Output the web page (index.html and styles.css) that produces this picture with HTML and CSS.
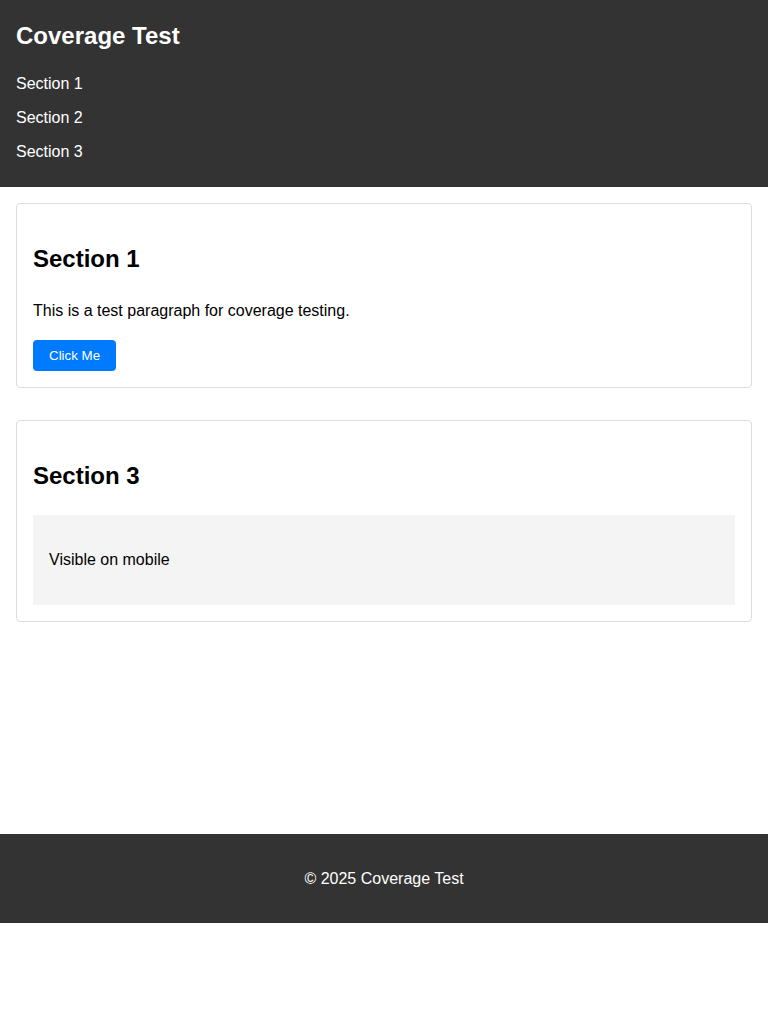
FILE: index.html
```html
<!DOCTYPE html>
<html lang="en">
<head>
<meta charset="utf-8">
<title>Coverage Test</title>
<link rel="stylesheet" href="styles.css">
</head>
<body>
<header class="site-header">
  <h1 class="site-title">Coverage Test</h1>
  <nav class="site-nav">
    <a class="nav-link" href="#section1">Section 1</a>
    <a class="nav-link" href="#section2">Section 2</a>
    <a class="nav-link" href="#section3">Section 3</a>
  </nav>
</header>
<main class="content">
  <section class="card" id="section1">
    <h2 class="card-title">Section 1</h2>
    <p class="card-text">This is a test paragraph for coverage testing.</p>
    <button class="btn" type="button">Click Me</button>
  </section>
  <section class="card" id="section3">
    <h2 class="card-title">Section 3</h2>
    <div class="mobile-box">
      <p class="card-text">Visible on mobile</p>
    </div>
  </section>
</main>
<footer class="site-footer">
  <p class="footer-text">© 2025 Coverage Test</p>
</footer>
</body>
</html>
```

FILE: styles.css
```css
* {
  box-sizing: border-box;
}

body {
  margin: 0;
  font-family: "Liberation Sans", Arial, sans-serif;
  font-size: 16px;
  line-height: 1.6;
  color: #000;
  background: #fff;
}

.site-header {
  background: #333;
  color: #fff;
  padding: 17px 16px 18px;
}

.site-title {
  margin: 0;
  font-size: 24px;
  line-height: 38px;
  font-weight: bold;
}

.site-nav {
  margin-top: 12px;
  display: flex;
  flex-direction: column;
}

.nav-link {
  display: block;
  color: #fff;
  text-decoration: none;
  padding: 4px 0;
  line-height: 26px;
}

.content {
  padding: 16px;
  min-height: 647px;
}

.card {
  border: 1px solid #ddd;
  border-radius: 4px;
  padding: 16px;
  margin-bottom: 32px;
}

.card-title {
  font-size: 24px;
  margin: 19.92px 0;
  line-height: 1.6;
}

.card-text {
  margin: 16px 0;
}

.btn {
  display: block;
  background: #007bff;
  color: #fff;
  border: none;
  border-radius: 4px;
  padding: 8px 16px;
  font-family: "Liberation Sans", Arial, sans-serif;
  font-size: 13.333px;
  line-height: normal;
  cursor: pointer;
}

.mobile-box {
  background: #f4f4f4;
  padding: 16px;
}

.site-footer {
  background: #333;
  color: #fff;
  text-align: center;
  padding: 16px;
}

.footer-text {
  margin: 16px 0;
  line-height: 25px;
}
```
